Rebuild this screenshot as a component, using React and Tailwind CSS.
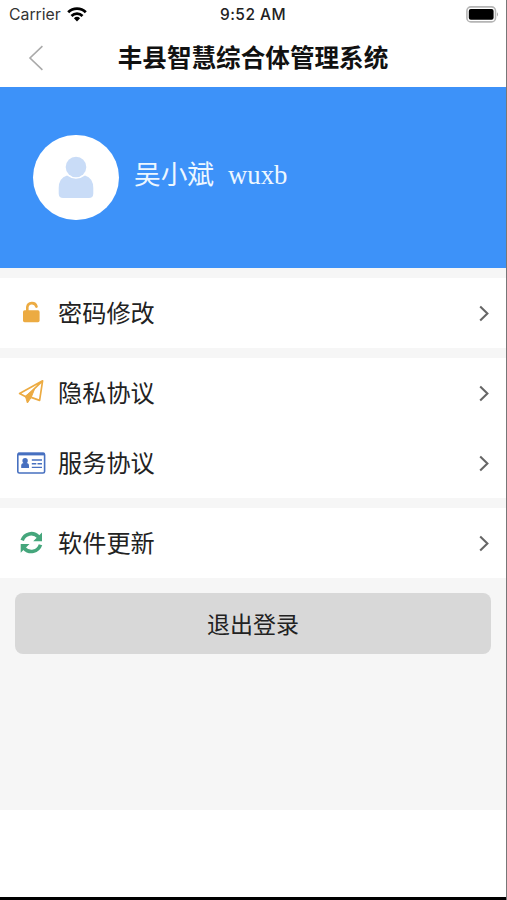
import React from 'react';

const LockIcon = () => (
    <svg viewBox="0 0 28 28" className="w-7 h-7" fill="none">
        <rect x="6" y="11.3" width="16.6" height="11.9" rx="1.6" fill="#ecab42" />
        <path d="M10.3 12V8.2a4.7 4.7 0 0 1 9.2-.6" stroke="#ecab42" strokeWidth="2.6" strokeLinecap="round" />
    </svg>
);

const PlaneIcon = () => (
    <svg viewBox="0 0 28 28" className="w-7 h-7" fill="none" stroke="#ecab42" strokeLinejoin="round">
        <path d="M25.6 1.8L2.6 14.6l6.2 3.2L25.6 1.8L22.6 21.4l-8.4-3" strokeWidth="1.7" />
        <path d="M8.4 17.2L17.5 10.2l-3.3 8.2l-3.8 5.6z" fill="#ecab42" strokeWidth="1" />
    </svg>
);

const CardIcon = () => (
    <svg viewBox="0 0 28 28" className="w-7 h-7 overflow-visible" fill="none">
        <rect x="0.8" y="4.2" width="26.8" height="19.8" rx="1.6" stroke="#4770c0" strokeWidth="1.6" />
        <path d="M1 5h26.4" stroke="#4770c0" strokeWidth="2.8" />
        <circle cx="8.1" cy="11.8" r="2.7" fill="#4770c0" />
        <path d="M4.2 19v-2.2q0-2.8 2.6-2.8h2.6q2.6 0 2.6 2.8V19z" fill="#4770c0" />
        <path d="M14.8 11H25M14.8 14.8h4.5M20.5 14.8H25M14.8 18.4H25" stroke="#4770c0" strokeWidth="1.4" />
    </svg>
);

const RefreshIcon = () => (
    <svg viewBox="0 0 28 28" className="w-7 h-7" fill="none">
        <path d="M5.2 11.4C7.6 4.2 16.4 2.4 21.6 8M23.5 15.8C21.1 23 12.3 24.8 7.1 19.2" stroke="#45a67c" strokeWidth="3.6" />
        <path d="M25 3.4v8.8h-8.8zM3.7 23.8V15h8.8z" fill="#45a67c" />
    </svg>
);

const groups = [
    [{ label: '密码修改', Icon: LockIcon }],
    [
        { label: '隐私协议', Icon: PlaneIcon },
        { label: '服务协议', Icon: CardIcon },
    ],
    [{ label: '软件更新', Icon: RefreshIcon }],
];

const StatusBar = () => (
    <div className="h-[29px] grid grid-cols-3 items-center pl-[9px] pr-[7px] font-['Inter','Liberation_Sans',sans-serif]">
        <div className="flex items-center gap-[6px] text-[15.8px] text-[#333]">
            <span className="pt-px">Carrier</span>
            <svg viewBox="0 0 20 15" className="w-5 h-[15px]" fill="none" stroke="#000" strokeWidth="2.8">
                <path d="M1.2 5.2a12.6 12.6 0 0 1 17.6 0M4.5 8.9a7.9 7.9 0 0 1 11 0" />
                <path d="M10 14.4L6.9 11.3a4.5 4.5 0 0 1 6.2 0z" fill="#000" stroke="none" />
            </svg>
        </div>
        <div className="text-center pt-px pr-[2px] text-[15.5px] tracking-[0.45px] font-medium text-[#222] whitespace-nowrap">9:52 AM</div>
        <div className="flex justify-end">
            <svg viewBox="0 0 33 17" className="w-[33px] h-[17px]">
                <rect x="0.9" y="0.9" width="28.6" height="15" rx="4" fill="#fff" stroke="#b5b5b5" strokeWidth="1.6" />
                <rect x="2.8" y="3" width="24.8" height="10.8" rx="2" fill="#000" />
                <path d="M31 6.3q2 2.1 0 4.2z" fill="#aaa" />
            </svg>
        </div>
    </div>
);

const Row = ({ label, Icon }) => (
    <button className="w-full h-[70px] flex items-center pl-[17px] pr-4 text-left">
        <Icon />
        <span className="ml-[13px] flex-1 pt-px text-[24.2px] leading-8 text-[#222]">{label}</span>
        <svg viewBox="0 0 12 18" className="w-3 h-[18px]" fill="none" stroke="#666" strokeWidth="2.1">
            <path d="M2.2 2.4L9.4 9.4l-7.2 7" />
        </svg>
    </button>
);

const App = () => {
    return (
        <div className="w-[507px] h-[900px] flex flex-col bg-white border-r border-[#777] overflow-hidden font-['Liberation_Sans','Noto_Sans_CJK_SC',sans-serif]">
            <StatusBar />
            <header className="h-[58px] grid grid-cols-[60px_1fr_60px] items-center">
                <button aria-label="返回" className="pl-[28px]">
                    <svg viewBox="0 0 16 26" className="w-4 h-[26px]" fill="none" stroke="#aaa" strokeWidth="1.6">
                        <path d="M14.4 1.2L2 13l12.4 11.8" />
                    </svg>
                </button>
                <h1 className="text-center pt-px text-[24.6px] leading-8 font-bold text-[#111]">丰县智慧综合体管理系统</h1>
            </header>

            <section className="h-[181px] flex items-center pl-[33px] bg-[#3d92f9]">
                <div className="w-[86px] h-[85px] rounded-full bg-white flex items-center justify-center pb-[2px]">
                    <svg viewBox="0 0 36 44" className="w-9 h-11" fill="#c9dcf7">
                        <circle cx="18" cy="12" r="10.3" />
                        <path d="M9 20.4Q18 27 27 20.4Q35.3 23 35.3 33v5.5q0 4.5-4.5 4.5H5.2Q.7 43 .7 38.5V33Q.7 23 9 20.4z" />
                    </svg>
                </div>
                <div className="ml-[15px] pb-[5px] flex items-center gap-[14px] text-[26.7px] leading-8 text-[#edf7ff]">
                    <span>吴小斌</span>
                    <span className="font-['Liberation_Serif',serif]">wuxb</span>
                </div>
            </section>

            <main className="h-[542px] bg-[#f6f6f6] pt-[10px]">
                <div className="flex flex-col gap-[10px]">
                    {groups.map((items) => (
                        <div key={items[0].label} className="bg-white">
                            {items.map((item) => (
                                <Row key={item.label} {...item} />
                            ))}
                        </div>
                    ))}
                </div>
                <div className="px-[15px] pt-[15px]">
                    <button className="w-full h-[61px] pt-[3px] rounded-lg bg-[#d8d8d8] text-[23px] text-[#222]">退出登录</button>
                </div>
            </main>
            <div className="mt-auto h-[3px] bg-black" />
        </div>
    );
};

export default App;
